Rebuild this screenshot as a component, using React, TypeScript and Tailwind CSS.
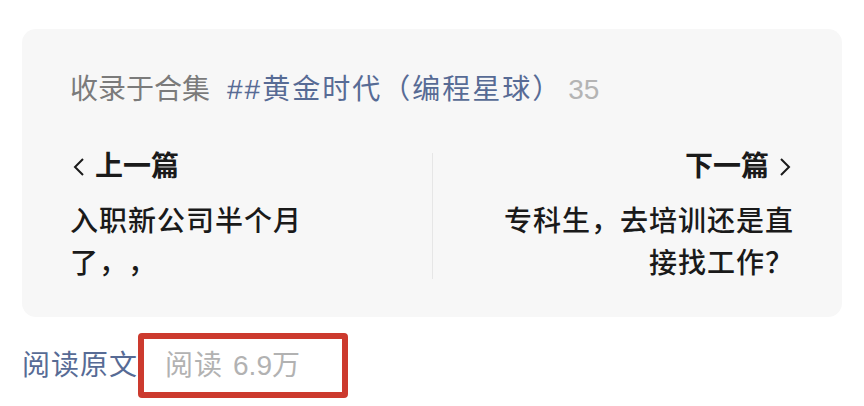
export default function App() {
  const font = "font-['Liberation_Sans','Noto_Sans_CJK_SC',sans-serif] [text-spacing-trim:space-all]";
  return (
    <div className={`w-[864px] h-[406px] bg-white overflow-hidden ${font}`}>
      <div className="ml-[22px] mt-[29px] w-[820px] h-[288px] rounded-[14px] bg-[#f7f7f7] px-[48px]">
        <div className="pt-[43px] flex items-center h-[79px] text-[28px] leading-[36px]">
          <span className="text-[#7b7b7b]">收录于合集</span>
          <span className="ml-[17px] tracking-[2px] text-[#576b95]">##黄金时代（编程星球）</span>
          <span className="ml-[6px] text-[#b4b4b4]">35</span>
        </div>

        <div className="mt-[41px] flex">
          <div className="flex-1 flex flex-col">
            <div className="flex items-center h-[36px] text-[28px] font-semibold text-[#1a1a1a]">
              <svg width="12" height="20" viewBox="0 0 12 20" className="ml-[3px] mr-[10px]">
                <path d="M10 2 L2 10 L10 18" fill="none" stroke="#1a1a1a" strokeWidth="2" />
              </svg>
              <span>上一篇</span>
            </div>
            <div className="mt-[16px] w-[258px] text-[28px] leading-[42px] tracking-[1px] font-medium text-[#1a1a1a]">
              入职新公司半个月了，，
            </div>
          </div>

          <div className="w-px bg-[#e6e6e6] mt-[4px] mb-[6px]" />

          <div className="flex-1 flex flex-col items-end">
            <div className="flex items-center h-[36px] text-[28px] font-semibold text-[#1a1a1a]">
              <span>下一篇</span>
              <svg width="12" height="20" viewBox="0 0 12 20" className="ml-[10px] mr-[3px]">
                <path d="M2 2 L10 10 L2 18" fill="none" stroke="#1a1a1a" strokeWidth="2" />
              </svg>
            </div>
            <div className="mt-[16px] w-[300px] text-right text-[28px] leading-[42px] tracking-[1px] font-medium text-[#1a1a1a]">
              专科生，去培训还是直接找工作？
            </div>
          </div>
        </div>
      </div>

      <div className="mt-[16px] ml-[22px] flex items-center">
        <span className="text-[28px] leading-[40px] tracking-[1px] text-[#576b95]">阅读原文</span>
        <div className="w-[210px] h-[65px] border-[6px] border-[#cc3a2e] rounded-[4px] flex items-center pl-[21px] text-[28px] text-[#b2b2b2]">
          <span className="tracking-[1px]">阅读</span>
          <span className="ml-[10px]">6.9万</span>
        </div>
      </div>
    </div>
  );
}
